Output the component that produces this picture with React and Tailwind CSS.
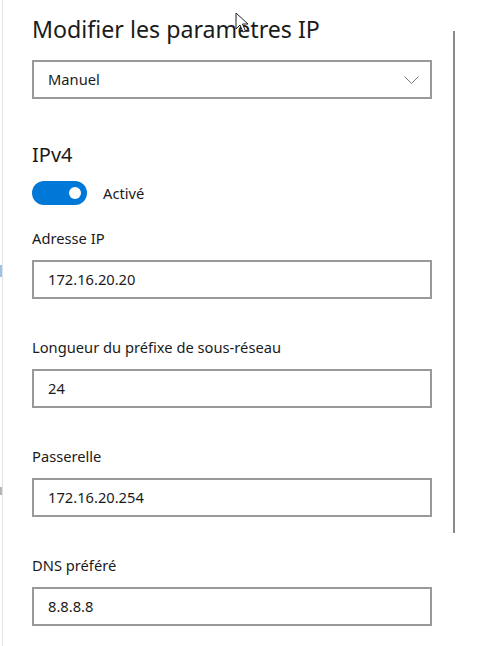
import React from 'react';

const font = { fontFamily: '"Noto Sans", "Open Sans", sans-serif' };

function Field({ label, value }) {
    return (
        <>
            <div className="mt-[38px] text-[14.7px] leading-[20px] text-[#1b1b1b]">{label}</div>
            <div className="mt-[12px] h-[39px] w-[400px] border-2 border-[#999999] bg-white flex items-center pl-[14px] text-[14.7px] text-[#1b1b1b]">
                {value}
            </div>
        </>
    );
}

export default function App() {
    return (
        <div className="relative w-[477px] h-[646px] bg-white flex overflow-hidden" style={font}>
            {/* left edge of the previous pane */}
            <div className="w-[3px] flex flex-col border-r border-[#e2e2e2]">
                <div className="mt-[265px] h-[12px] w-[2px] bg-[#9cc3ea]" />
                <div className="mt-[210px] h-[8px] w-[2px] bg-[#b5b5b5]" />
            </div>

            <div className="ml-[29px] flex flex-col w-[400px]">
                <h1 className="pt-[15px] text-[23.2px] leading-[28px] text-[#1b1b1b] font-normal">Modifier les paramètres IP</h1>

                <div className="mt-[17px] h-[39px] w-[400px] border-2 border-[#999999] flex items-center justify-between pl-[14px] pr-[11px] text-[14.7px] text-[#1b1b1b]">
                    <span>Manuel</span>
                    <svg width="15" height="8" viewBox="0 0 15 8" fill="none" stroke="#7a7a7a" strokeWidth="1">
                        <path d="M0.5 0.5 L7.5 7.5 L14.5 0.5" />
                    </svg>
                </div>

                <div className="mt-[43px] text-[20px] leading-[26px] text-[#1b1b1b]">IPv4</div>

                <div className="mt-[13px] flex items-center gap-[16px]">
                    <div className="w-[55px] h-[24px] rounded-full bg-[#0078d7] flex items-center justify-end pr-[6px]">
                        <div className="w-[12px] h-[12px] rounded-full bg-white" />
                    </div>
                    <span className="text-[14.7px] text-[#1b1b1b]">Activé</span>
                </div>

                <div className="mt-[23px] text-[14.7px] leading-[20px] text-[#1b1b1b]">Adresse IP</div>
                <div className="mt-[12px] h-[39px] w-[400px] border-2 border-[#999999] flex items-center pl-[14px] text-[14.7px] text-[#1b1b1b]">
                    172.16.20.20
                </div>

                <Field label="Longueur du préfixe de sous-réseau" value="24" />
                <Field label="Passerelle" value="172.16.20.254" />
                <Field label="DNS préféré" value="8.8.8.8" />
            </div>

            {/* scrollbar */}
            <div className="ml-[21px] mt-[31px] w-[2px] h-[502px] bg-[#8a8a8a]" />

            {/* mouse pointer */}
            <svg className="absolute left-[235px] top-[12px]" width="14" height="22" viewBox="0 0 14 22">
                <path d="M1 1 L1 17 L5 13 L8 20 L10.5 19 L7.5 12 L13 12 Z" fill="white" stroke="#222" strokeWidth="1" strokeLinejoin="round" />
            </svg>
        </div>
    );
}
